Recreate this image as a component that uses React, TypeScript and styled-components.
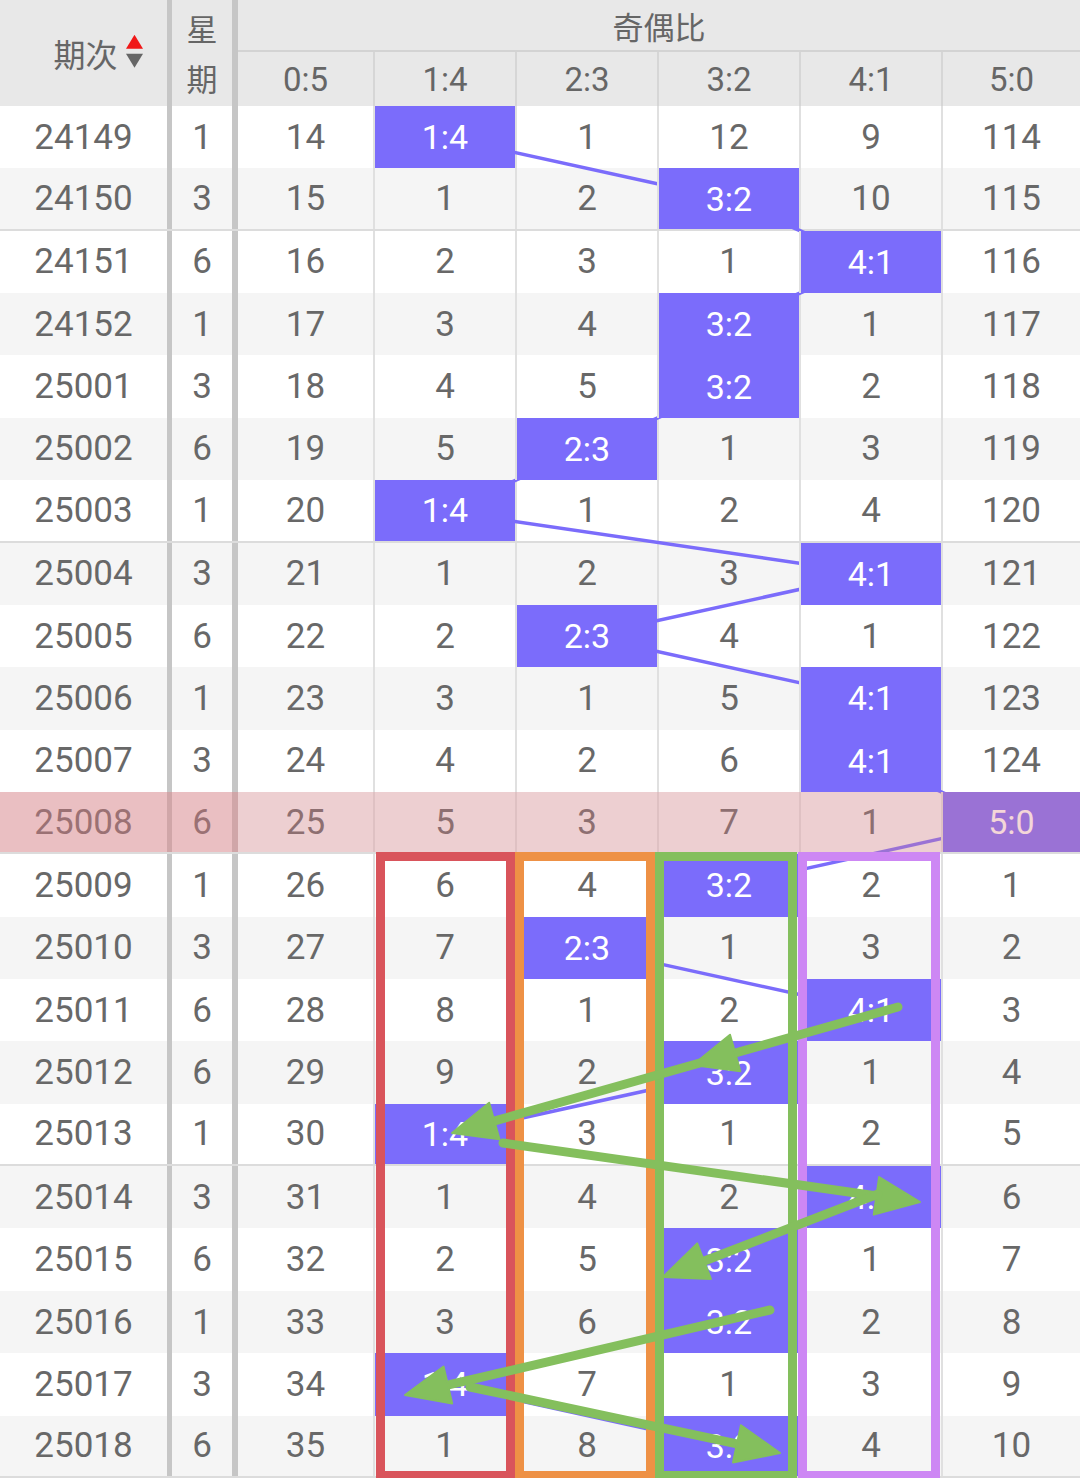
import React from 'react';
import styled, { createGlobalStyle, css } from 'styled-components';

const ROW_H = 62.36;
const HEADER_H = 106;
const PURPLE = '#7b6cfb';
const ARROW_GREEN = '#84bf5d';
const LABELS = ['0:5', '1:4', '2:3', '3:2', '4:1', '5:0'];
const COL_CENTERS = [305.5, 445, 587, 729, 871, 1011.5];

type RawRow = [string, number, number[], number];

const RAW: RawRow[] = [
  ['24149', 1, [14, 0, 1, 12, 9, 114], 1],
  ['24150', 3, [15, 1, 2, 0, 10, 115], 3],
  ['24151', 6, [16, 2, 3, 1, 0, 116], 4],
  ['24152', 1, [17, 3, 4, 0, 1, 117], 3],
  ['25001', 3, [18, 4, 5, 0, 2, 118], 3],
  ['25002', 6, [19, 5, 0, 1, 3, 119], 2],
  ['25003', 1, [20, 0, 1, 2, 4, 120], 1],
  ['25004', 3, [21, 1, 2, 3, 0, 121], 4],
  ['25005', 6, [22, 2, 0, 4, 1, 122], 2],
  ['25006', 1, [23, 3, 1, 5, 0, 123], 4],
  ['25007', 3, [24, 4, 2, 6, 0, 124], 4],
  ['25008', 6, [25, 5, 3, 7, 1, 0], 5],
  ['25009', 1, [26, 6, 4, 0, 2, 1], 3],
  ['25010', 3, [27, 7, 0, 1, 3, 2], 2],
  ['25011', 6, [28, 8, 1, 2, 0, 3], 4],
  ['25012', 6, [29, 9, 2, 0, 1, 4], 3],
  ['25013', 1, [30, 0, 3, 1, 2, 5], 1],
  ['25014', 3, [31, 1, 4, 2, 0, 6], 4],
  ['25015', 6, [32, 2, 5, 0, 1, 7], 3],
  ['25016', 1, [33, 3, 6, 0, 2, 8], 3],
  ['25017', 3, [34, 0, 7, 1, 3, 9], 1],
  ['25018', 6, [35, 1, 8, 0, 4, 10], 3],
];

const HIGHLIGHT = 11;

const FRAMES = [
  { color: '#d9545b', left: 376, width: 139 },
  { color: '#ee9145', left: 515, width: 140 },
  { color: '#84bf5d', left: 655, width: 142 },
  { color: '#cd87f4', left: 798, width: 142 },
];

type Arrow = { from: [number, number]; to: [number, number]; mid?: number };

const ARROWS: Arrow[] = [
  { from: [898, 1007], to: [452, 1133], mid: 0.46 },
  { from: [503, 1143], to: [920, 1202] },
  { from: [878, 1194], to: [663, 1277] },
  { from: [770, 1310], to: [405, 1395] },
  { from: [470, 1387], to: [780, 1453] },
];

const GlobalStyle = createGlobalStyle`
  html, body {
    margin: 0;
    padding: 0;
    background: #ffffff;
    overflow: hidden;
  }
  body {
    font-family: Roboto, "Noto Sans CJK SC", sans-serif;
  }
`;

const Table = styled.div`
  position: relative;
  z-index: 0;
  width: 1080px;
`;

const Header = styled.div`
  display: grid;
  grid-template-columns: 172px 66px 842px;
  height: ${HEADER_H}px;
  background: #e8e8e8;
  color: #666666;
`;

const HeadPeriod = styled.div`
  display: flex;
  align-items: center;
  justify-content: center;
  box-sizing: border-box;
  border-right: 5px solid #c6c6c6;
  font: 400 32px "Noto Sans CJK SC", sans-serif;
`;

const PeriodLabel = styled.span`
  position: relative;
  left: 2px;
`;

const SortIcon = styled.svg`
  position: absolute;
  left: calc(100% + 8px);
  top: 50%;
  transform: translateY(-54%);
`;

const HeadWeek = styled.div`
  display: flex;
  flex-direction: column;
  align-items: center;
  justify-content: center;
  box-sizing: border-box;
  border-right: 6px solid #c6c6c6;
  font: 400 31px/50px "Noto Sans CJK SC", sans-serif;
`;

const HeadGroup = styled.div`
  display: grid;
  grid-template-rows: 52px 54px;
`;

const GroupTitle = styled.div`
  display: flex;
  align-items: center;
  justify-content: center;
  box-sizing: border-box;
  border-bottom: 2px solid #d3d3d3;
  font: 400 31px "Noto Sans CJK SC", sans-serif;
`;

const SubRow = styled.div`
  display: grid;
  grid-template-columns: 135px repeat(4, 142px) 139px;
`;

const SubCell = styled.div<{ $edge: boolean }>`
  display: flex;
  align-items: center;
  justify-content: center;
  box-sizing: border-box;
  font: 400 33px Roboto, sans-serif;
  ${(p) => p.$edge && css`border-left: 2px solid #d6d6d6;`}
`;

const Body = styled.div`
  position: relative;
  z-index: 0;
`;

const Row = styled.div<{ $alt: boolean; $sep: boolean; $hl: boolean }>`
  position: relative;
  display: grid;
  grid-template-columns: 172px 66px 135px repeat(4, 142px) 139px;
  height: ${ROW_H}px;
  box-sizing: border-box;
  background: ${(p) => (p.$alt ? '#f5f5f5' : '#ffffff')};
  ${(p) => p.$sep && css`border-bottom: 2px solid #dcdcdc;`}
  ${(p) =>
    p.$hl &&
    css`
      &::after {
        content: '';
        position: absolute;
        inset: 0;
        background: rgba(222, 128, 134, 0.32);
        z-index: 3;
      }
      &::before {
        content: '';
        position: absolute;
        left: 0;
        top: 0;
        bottom: 0;
        width: 238px;
        background: rgba(222, 120, 126, 0.18);
        z-index: 3;
      }
    `}
`;

const Cell = styled.div`
  display: flex;
  align-items: center;
  justify-content: center;
  box-sizing: border-box;
  min-width: 0;
  font: 400 35px Roboto, sans-serif;
  color: #686868;
`;

const PeriodCell = styled(Cell)`
  border-right: 5px solid #c6c6c6;
`;

const WeekCell = styled(Cell)`
  border-right: 6px solid #c6c6c6;
`;

const RatioCell = styled(Cell)<{ $edge: boolean; $hit: boolean }>`
  ${(p) => p.$edge && css`border-left: 2px solid #e0e0e0;`}
  ${(p) =>
    p.$hit &&
    css`
      position: relative;
      z-index: 2;
      background: ${PURPLE};
      background-clip: padding-box;
      color: #ffffff;
      font-size: 34px;
    `}
`;

const LinkLayer = styled.svg`
  position: absolute;
  left: 0;
  top: 0;
  z-index: 1;
  pointer-events: none;
`;

const Frame = styled.div<{ $color: string; $left: number; $width: number }>`
  position: absolute;
  top: 852px;
  left: ${(p) => p.$left}px;
  width: ${(p) => p.$width}px;
  height: 628px;
  box-sizing: border-box;
  border: 9px solid ${(p) => p.$color};
  z-index: 1;
  pointer-events: none;
`;

const ArrowLayer = styled.svg`
  position: absolute;
  left: 0;
  top: 0;
  z-index: 2;
  pointer-events: none;
`;

const HEAD_L = 44;
const HEAD_W = 19;

function head(tip: [number, number], ux: number, uy: number) {
  const bx = tip[0] - ux * HEAD_L;
  const by = tip[1] - uy * HEAD_L;
  const nx = -uy;
  const ny = ux;
  return `${tip[0]},${tip[1]} ${bx + nx * HEAD_W},${by + ny * HEAD_W} ${bx - nx * HEAD_W},${by - ny * HEAD_W}`;
}

function ArrowShape({ a }: { a: Arrow }) {
  const dx = a.to[0] - a.from[0];
  const dy = a.to[1] - a.from[1];
  const len = Math.hypot(dx, dy);
  const ux = dx / len;
  const uy = dy / len;
  const endX = a.to[0] - ux * (HEAD_L - 6);
  const endY = a.to[1] - uy * (HEAD_L - 6);
  const heads = [head(a.to, ux, uy)];
  if (a.mid !== undefined) {
    heads.push(head([a.from[0] + dx * a.mid, a.from[1] + dy * a.mid], ux, uy));
  }
  return (
    <g>
      <line
        x1={a.from[0]}
        y1={a.from[1]}
        x2={endX}
        y2={endY}
        stroke={ARROW_GREEN}
        strokeWidth={9}
        strokeLinecap="round"
      />
      {heads.map((pts, i) => (
        <polygon key={i} points={pts} fill={ARROW_GREEN} stroke={ARROW_GREEN} strokeWidth={2} strokeLinejoin="round" />
      ))}
    </g>
  );
}

export default function App() {
  const bodyH = RAW.length * ROW_H;
  const links = RAW.slice(1).map((r, i) => {
    const prev = RAW[i];
    return {
      x1: COL_CENTERS[prev[3]],
      y1: i * ROW_H + ROW_H / 2,
      x2: COL_CENTERS[r[3]],
      y2: (i + 1) * ROW_H + ROW_H / 2,
    };
  });

  return (
    <>
      <GlobalStyle />
      <Table>
        <Header>
          <HeadPeriod>
            <PeriodLabel>
              期次
              <SortIcon width="17" height="34" viewBox="0 0 17 34">
                <polygon points="8.5,0 17,14 0,14" fill="#f01818" />
                <polygon points="0,19 17,19 8.5,33" fill="#666666" />
              </SortIcon>
            </PeriodLabel>
          </HeadPeriod>
          <HeadWeek>
            <span>星</span>
            <span>期</span>
          </HeadWeek>
          <HeadGroup>
            <GroupTitle>奇偶比</GroupTitle>
            <SubRow>
              {LABELS.map((l, j) => (
                <SubCell key={l} $edge={j > 0}>
                  {l}
                </SubCell>
              ))}
            </SubRow>
          </HeadGroup>
        </Header>
        <Body>
          {RAW.map(([period, week, values, hit], i) => (
            <Row key={period} $alt={i % 2 === 1} $sep={(i - 1) % 5 === 0} $hl={i === HIGHLIGHT}>
              <PeriodCell>{period}</PeriodCell>
              <WeekCell>{week}</WeekCell>
              {values.map((v, j) => (
                <RatioCell key={j} $edge={j > 0} $hit={j === hit}>
                  {j === hit ? LABELS[j] : v}
                </RatioCell>
              ))}
            </Row>
          ))}
          <LinkLayer width="1080" height={bodyH} viewBox={`0 0 1080 ${bodyH}`}>
            {links.map((l, i) => (
              <line key={i} {...l} stroke={PURPLE} strokeWidth={3.5} />
            ))}
          </LinkLayer>
        </Body>
        {FRAMES.map((f) => (
          <Frame key={f.color} $color={f.color} $left={f.left} $width={f.width} />
        ))}
        <ArrowLayer width="1080" height="1480" viewBox="0 0 1080 1480">
          {ARROWS.map((a, i) => (
            <ArrowShape key={i} a={a} />
          ))}
        </ArrowLayer>
      </Table>
    </>
  );
}
